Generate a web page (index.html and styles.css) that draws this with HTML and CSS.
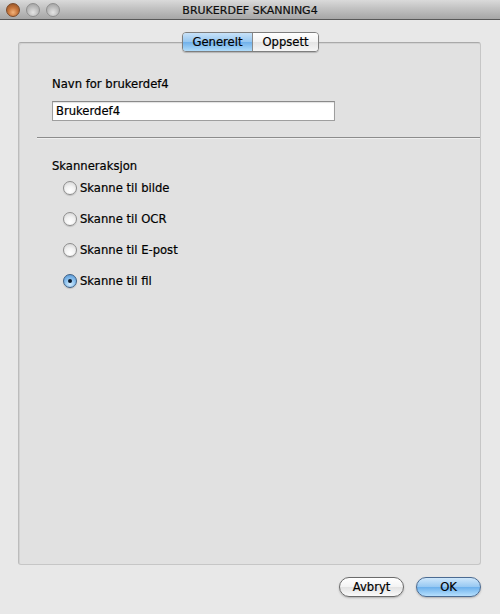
FILE: index.html
```html
<!DOCTYPE html>
<html>
<head>
<meta charset="utf-8">
<link rel="stylesheet" href="styles.css">
</head>
<body>
<div class="window">
  <div class="titlebar">
    <div class="lights">
      <span class="light close"></span>
      <span class="light idle"></span>
      <span class="light idle"></span>
    </div>
    <div class="title">BRUKERDEF SKANNING4</div>
  </div>
  <div class="content">
    <div class="group">
      <div class="tabs">
        <span class="tab active">Generelt</span>
        <span class="tab">Oppsett</span>
      </div>
      <div class="section name-section">
        <div class="label">Navn for brukerdef4</div>
        <div class="field">Brukerdef4</div>
      </div>
      <div class="separator"></div>
      <div class="section">
        <div class="label">Skanneraksjon</div>
        <div class="radios">
          <div class="radio-row"><span class="radio"></span><span>Skanne til bilde</span></div>
          <div class="radio-row"><span class="radio"></span><span>Skanne til OCR</span></div>
          <div class="radio-row"><span class="radio"></span><span>Skanne til E-post</span></div>
          <div class="radio-row"><span class="radio checked"></span><span>Skanne til fil</span></div>
        </div>
      </div>
    </div>
    <div class="buttons">
      <span class="btn">Avbryt</span>
      <span class="btn default">OK</span>
    </div>
  </div>
</div>
</body>
</html>
```

FILE: styles.css
```css
* { box-sizing: border-box; }
html, body { margin: 0; padding: 0; }
body {
  width: 500px;
  height: 614px;
  background: #e8e8e8;
  font-family: "DejaVu Sans", "Noto Sans", sans-serif;
  font-size: 11.6px;
  color: #000;
  overflow: hidden;
  -webkit-text-stroke: 0.2px #000;
}
.window { width: 500px; height: 614px; display: flex; flex-direction: column; }
.titlebar {
  position: relative;
  height: 20px;
  background: linear-gradient(#dadada, #c4c4c4 40%, #a6a6a6);
  border-bottom: 1px solid #585858;
  display: flex;
  align-items: center;
  justify-content: center;
}
.lights {
  position: absolute;
  left: 6px;
  top: 3px;
  display: flex;
  gap: 6px;
}
.light {
  width: 14px;
  height: 14px;
  border-radius: 50%;
  display: block;
}
.light.close {
  background: radial-gradient(circle at 50% 70%, #f3b47c 0%, #c7763c 45%, #8a4a1e 100%);
  border: 1px solid #7a4a2a;
}
.light.idle {
  background: radial-gradient(circle at 50% 70%, #e4e4e4 0%, #bdbdbd 50%, #9a9a9a 100%);
  border: 1px solid #8e8e8e;
}
.title {
  font-size: 11px;
  color: #111;
  padding-top: 1px;
}
.content {
  flex: 1;
  padding: 22px 19px 0 18px;
  display: flex;
  flex-direction: column;
}
.group {
  position: relative;
  height: 523px;
  background: #e1e1e1;
  border: 1px solid #c6c6c6;
  border-top-color: #a9a9a9;
  border-left-color: #bcbcbc;
  border-radius: 3px;
  box-shadow: inset 1px 1px 0 #d2d2d2;
  padding-top: 34px;
}
.tabs {
  position: absolute;
  top: -11px;
  left: 163px;
  display: flex;
  height: 20px;
  border: 1px solid #7e7e7e;
  border-radius: 4px;
  overflow: hidden;
  box-shadow: 0 1px 1px rgba(0,0,0,0.2);
}
.tab {
  display: flex;
  align-items: center;
  justify-content: center;
  height: 18px;
  background: linear-gradient(#ffffff, #f2f2f2 50%, #e4e4e4 51%, #f6f6f6);
}
.tab:first-child { width: 70px; border-right: 1px solid #8a8a8a; }
.tab:last-child { width: 65px; }
.tab.active {
  background: linear-gradient(#c8e2f8, #95c6f0 50%, #6fb0ea 51%, #b0dcfa);
}
.section { padding-left: 33px; }
.label { height: 14px; line-height: 14px; }
.field {
  margin-top: 10px;
  width: 283px;
  height: 20px;
  background: #fff;
  border: 1px solid #9e9e9e;
  border-top-color: #8a8a8a;
  box-shadow: inset 0 1px 1px rgba(0,0,0,0.12);
  padding-left: 3px;
  line-height: 18px;
}
.separator {
  margin: 16px 0 20px 18px;
  height: 1px;
  background: #8c8c8c;
  border-bottom: 1px solid #efefef;
  box-sizing: content-box;
}
.radios {
  margin-top: 7px;
  padding-left: 11px;
  display: flex;
  flex-direction: column;
  gap: 15px;
}
.radio-row {
  display: flex;
  align-items: center;
  gap: 3px;
  height: 16px;
}
.radio {
  width: 14px;
  height: 14px;
  border-radius: 50%;
  border: 1px solid #8d8d8d;
  background: radial-gradient(circle at 50% 75%, #ffffff 0%, #f2f2f2 45%, #d0d0d0 100%);
  box-shadow: 0 1px 1px rgba(0,0,0,0.15);
  position: relative;
  flex: none;
}
.radio.checked {
  border-color: #3d5f84;
  background: radial-gradient(circle at 50% 75%, #d6ecfc 0%, #8ec3ef 45%, #4e8fd0 100%);
}
.radio.checked::after {
  content: "";
  position: absolute;
  left: 4px;
  top: 4px;
  width: 4px;
  height: 4px;
  border-radius: 50%;
  background: #0b1a2c;
}
.buttons {
  display: flex;
  justify-content: flex-end;
  gap: 12px;
  margin-top: 12px;
}
.btn {
  width: 65px;
  height: 20px;
  border-radius: 10px;
  border: 1px solid #6b6b6b;
  display: flex;
  align-items: center;
  justify-content: center;
  background: linear-gradient(#ffffff, #f3f3f3 50%, #e2e2e2 51%, #fafafa);
  box-shadow: 0 1px 2px rgba(0,0,0,0.25);
}
.btn.default {
  border-color: #4b6b92;
  background: linear-gradient(#cfe7fb, #96c8f2 50%, #6cb0ec 51%, #b6e0fd);
}
```
